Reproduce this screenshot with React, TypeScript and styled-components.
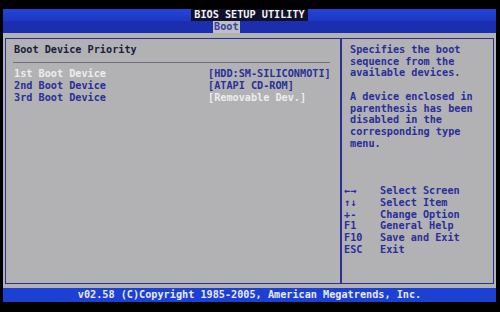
import { Fragment } from 'react';
import styled, { createGlobalStyle } from 'styled-components';

const GlobalStyle = createGlobalStyle`
  html, body {
    margin: 0;
    padding: 0;
    background: #000;
  }
  #root {
    width: 500px;
    height: 312px;
    overflow: hidden;
  }
`;

const BLUE_TEXT = '#2a2e9a';
const LIGHT_TEXT = '#ececec';

const Screen = styled.div`
  width: 493px;
  margin-left: 3px;
  padding-top: 9px;
  font-family: 'DejaVu Sans Mono', 'Liberation Mono', monospace;
  font-size: 10.2px;
  font-weight: bold;
`;

const TitleBar = styled.div`
  height: 12px;
  display: flex;
  justify-content: center;
  background: linear-gradient(#2444d6, #1c38c4);
`;

const Title = styled.span`
  display: block;
  padding: 0 3px;
  line-height: 12px;
  color: #f4f4f4;
  background: #10102a;
`;

const TabBar = styled.div`
  height: 12px;
  display: flex;
  padding-left: 210px;
  background: #1b2fae;
`;

const Tab = styled.span`
  display: block;
  padding: 0 1px;
  line-height: 12px;
  color: #3844a4;
  background: #bfbfc2;
`;

const Panel = styled.div`
  height: 255px;
  box-sizing: border-box;
  padding: 5px 2px 4px 2px;
  background: #b2b2b4;
`;

const Frame = styled.div`
  height: 100%;
  box-sizing: border-box;
  border: 1px solid #2c3090;
  display: grid;
  grid-template-columns: 334px 1fr;
`;

const LeftColumn = styled.div`
  padding: 5px 0 0 8px;
`;

const RightColumn = styled.div`
  border-left: 2px solid #2c3090;
  padding: 5px 0 0 2px;
  display: flex;
  flex-direction: column;
`;

const SectionTitle = styled.div`
  line-height: 12px;
  color: #1c1c3c;
`;

const Separator = styled.div`
  height: 1px;
  width: 317px;
  margin: 6px 0 5px -1px;
  background: #70707e;
`;

const ItemRow = styled.div`
  display: grid;
  grid-template-columns: 194px 1fr;
  line-height: 12px;
  white-space: pre;
`;

const ItemText = styled.span<{ $light?: boolean }>`
  color: ${(p) => (p.$light ? LIGHT_TEXT : BLUE_TEXT)};
`;

const HelpText = styled.div`
  margin-left: 6px;
  line-height: 11.7px;
  color: ${BLUE_TEXT};
  white-space: pre;
`;

const HelpGap = styled.div`
  height: 11.7px;
`;

const KeyList = styled.div`
  margin-top: 36px;
  display: grid;
  grid-template-columns: 36px 1fr;
  line-height: 11.7px;
  color: ${BLUE_TEXT};
  white-space: pre;
`;

const Footer = styled.div`
  height: 14px;
  line-height: 14px;
  text-align: center;
  color: #e8e8f2;
  background: #1c40d2;
`;

const items = [
  { label: '1st Boot Device', value: '[HDD:SM-SILICONMOTI]', lightLabel: true, lightValue: false },
  { label: '2nd Boot Device', value: '[ATAPI CD-ROM]', lightLabel: false, lightValue: false },
  { label: '3rd Boot Device', value: '[Removable Dev.]', lightLabel: false, lightValue: true },
];

const help = [
  ['Specifies the boot', 'sequence from the', 'available devices.'],
  ['A device enclosed in', 'parenthesis has been', 'disabled in the', 'corresponding type', 'menu.'],
];

const keys = [
  ['←→', 'Select Screen'],
  ['↑↓', 'Select Item'],
  ['+-', 'Change Option'],
  ['F1', 'General Help'],
  ['F10', 'Save and Exit'],
  ['ESC', 'Exit'],
];

export default function App() {
  return (
    <>
      <GlobalStyle />
      <Screen>
        <TitleBar>
          <Title>BIOS SETUP UTILITY</Title>
        </TitleBar>
        <TabBar>
          <Tab>Boot</Tab>
        </TabBar>
        <Panel>
          <Frame>
            <LeftColumn>
              <SectionTitle>Boot Device Priority</SectionTitle>
              <Separator />
              {items.map((item) => (
                <ItemRow key={item.label}>
                  <ItemText $light={item.lightLabel}>{item.label}</ItemText>
                  <ItemText $light={item.lightValue}>{item.value}</ItemText>
                </ItemRow>
              ))}
            </LeftColumn>
            <RightColumn>
              {help.map((para, i) => (
                <div key={i}>
                  {i > 0 && <HelpGap />}
                  {para.map((line) => (
                    <HelpText key={line}>{line}</HelpText>
                  ))}
                </div>
              ))}
              <KeyList>
                {keys.map(([k, d]) => (
                  <Fragment key={k}>
                    <span>{k}</span>
                    <span>{d}</span>
                  </Fragment>
                ))}
              </KeyList>
            </RightColumn>
          </Frame>
        </Panel>
        <Footer>v02.58 (C)Copyright 1985-2005, American Megatrends, Inc.</Footer>
      </Screen>
    </>
  );
}
